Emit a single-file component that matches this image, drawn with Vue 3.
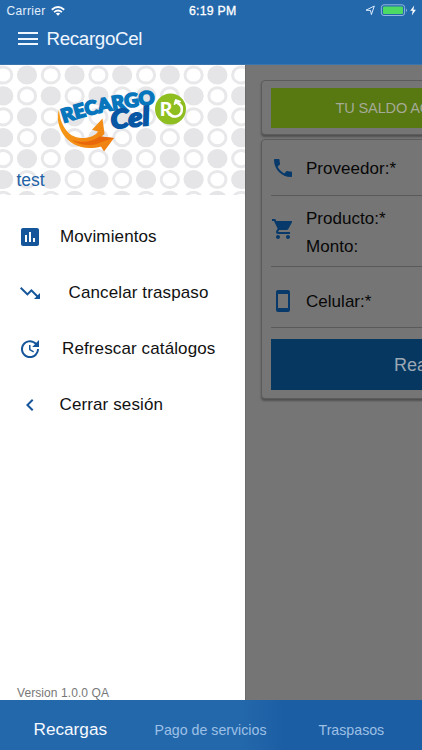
<script setup>
const menu = [
  { label: 'Movimientos', icon: 'chart', indent: 60 },
  { label: 'Cancelar traspaso', icon: 'trend', indent: 68.5 },
  { label: 'Refrescar catálogos', icon: 'update', indent: 62 },
  { label: 'Cerrar sesión', icon: 'back', indent: 59.5 },
]
const paths = {
  chart: 'M19 3H5c-1.1 0-2 .9-2 2v14c0 1.1.9 2 2 2h14c1.1 0 2-.9 2-2V5c0-1.1-.9-2-2-2zM9 17H7v-7h2v7zm4 0h-2V7h2v10zm4 0h-2v-4h2v4z',
  trend: 'M16 18l2.29-2.29-4.88-4.88-4 4L2 7.41 3.41 6l6 6 4-4 6.3 6.29L22 12v6z',
  update: 'M21 10.12h-6.78l2.74-2.82c-2.73-2.7-7.15-2.8-9.88-.1-2.73 2.71-2.73 7.08 0 9.79s7.15 2.71 9.88 0C18.32 15.65 19 14.08 19 12.1h2c0 1.98-.88 4.55-2.64 6.29-3.51 3.48-9.21 3.48-12.72 0-3.5-3.47-3.53-9.11-.02-12.58s9.14-3.47 12.65 0L21 3v7.12zM12.5 8v4.25l3.5 2.08-.72 1.21L11 13V8h1.5z',
  back: 'M15.41 7.41L14 6l-6 6 6 6 1.41-1.41L10.83 12z',
}
const dots = []
for (let r = 0; r < 7; r++) {
  for (let c = 0; c < 11; c++) {
    dots.push({ x: 3.2 + c * 23.8, y: 10 + r * 20.9, solid: (r + c) % 2 === 1 })
  }
}
</script>

<template>
  <div class="screen">
    <header>
      <div class="status">
        <span class="carrier">Carrier</span>
        <svg class="wifi" viewBox="0 0 14 10"><g fill="none" stroke="#fff" stroke-width="1.8"><path d="M.8 3.7Q7-1.7 13.2 3.7" /><path d="M3.1 6.1q3.9-3.2 7.8 0" /></g><path d="M4.8 7.5q2.2-1.6 4.4 0L7 9.8z" fill="#fff" /></svg>
        <span class="clock">6:19 PM</span>
        <svg class="power" viewBox="0 0 54 13">
          <path d="M1 6.2L9.3 2 6.4 10.6 5.5 6.5z" fill="none" stroke="#dcecff" stroke-width="1" stroke-linejoin="round" />
          <rect x="16.4" y=".8" width="23.2" height="10.7" rx="2.5" fill="none" stroke="#8fb5df" />
          <rect x="18" y="2.4" width="20" height="7.5" rx="1" fill="#4cd964" />
          <path d="M41 4.4q2 1.8 0 3.6z" fill="#8fb5df" />
          <path d="M49.2 1.5l-4 5.3h2.5l-.9 4.7 4.1-5.8h-2.5z" fill="#fff" />
        </svg>
      </div>
      <div class="title">
        <span class="burger"><i></i><i></i><i></i></span>
        <h1>RecargoCel</h1>
      </div>
    </header>

    <main>
      <aside>
        <div class="hero">
          <svg viewBox="0 0 245 130">
            <template v-for="(d, i) in dots" :key="i">
              <ellipse v-if="d.solid" :cx="d.x" :cy="d.y" rx="10.1" ry="9.6" fill="#e5e5e8" />
              <ellipse v-else :cx="d.x" :cy="d.y" rx="8.6" ry="8.1" fill="#fff" stroke="#e8e8eb" stroke-width="3" />
            </template>
            <defs>
              <linearGradient id="flame" x1="0" y1="0" x2="1" y2="1"><stop offset="0" stop-color="#f7a11b" /><stop offset="1" stop-color="#ef7d10" /></linearGradient>
              <path id="arc" d="M63.5 58 Q108 43 162 38.5" />
            </defs>
            <path d="M59 44.5C59.5 56 66 73 82 73 90 73 95.500 70.500 98 66.500L92 64.800 102.500 53.500 104.500 69 101.500 71.500 114 73 104 86.500 101 81.500C84 86 70 80 63 69 58 61 56.500 52 59 44.500Z" fill="url(#flame)" />
            <path d="M72 75C83 79 94 76 99.500 71.500L114 73 103 76.500C92 82 80 81 72 75Z" fill="#e9680c" />
            <text class="brand"><textPath href="#arc" textLength="94" lengthAdjust="spacingAndGlyphs">RECARGO</textPath></text>
            <text class="cel" transform="translate(111.500 64) rotate(-6)" textLength="39" lengthAdjust="spacingAndGlyphs">Cel</text>
            <circle cx="170.500" cy="44" r="15.500" fill="#8fbe21" />
            <text class="r" x="159.700" y="51" textLength="12.500" lengthAdjust="spacingAndGlyphs">R</text>
            <path d="M169.500 48.500C172 53 180 52.500 181.600 46.500 182.500 42.500 181 39.500 177.500 38" fill="none" stroke="#fff" stroke-width="2.600" />
            <path d="M174 39.500L175.500 34.500 181 36.500Z" fill="#fff" stroke="#fff" />
          </svg>
          <span class="user">test</span>
        </div>
        <nav>
          <a v-for="m in menu" :key="m.label">
            <span class="slot" :style="{ width: m.indent + 'px' }"><svg viewBox="0 0 24 24"><path :d="paths[m.icon]" /></svg></span>
            <span>{{ m.label }}</span>
          </a>
        </nav>
        <small>Version 1.0.0 QA</small>
      </aside>

      <section class="content">
        <div class="card balance"><div class="saldo">TU SALDO ACTUAL</div></div>
        <div class="card form">
          <div class="row first">
            <svg viewBox="0 0 24 24"><path d="M6.620 10.790c1.440 2.830 3.760 5.140 6.590 6.590l2.200-2.200c.27-.27.67-.36 1.020-.24 1.120.37 2.330.57 3.570.57.55 0 1 .45 1 1V20c0 .55-.45 1-1 1-9.390 0-17-7.610-17-17 0-.55.45-1 1-1h3.500c.55 0 1 .45 1 1 0 1.250.2 2.450.57 3.570.11.35.03.74-.25 1.020l-2.200 2.200z" /></svg>
            <div>Proveedor:*</div>
          </div>
          <div class="row second">
            <svg viewBox="0 0 24 24"><path d="M7 18c-1.100 0-1.990.9-1.990 2S5.900 22 7 22s2-.9 2-2-.9-2-2-2zM1 2v2h2l3.600 7.590-1.350 2.450c-.16.28-.25.61-.25.96 0 1.100.9 2 2 2h12v-2H7.420c-.14 0-.25-.11-.25-.25l.03-.12.9-1.630h7.450c.75 0 1.410-.41 1.750-1.030l3.580-6.490A1 1 0 0 0 20 4H5.210l-.94-2H1zm16 16c-1.100 0-1.990.9-1.990 2s.89 2 1.990 2 2-.9 2-2-.9-2-2-2z" /></svg>
            <div>Producto:*<br>Monto:</div>
          </div>
          <div class="row third">
            <svg viewBox="0 0 24 24"><path d="M17 1.010L7 1c-1.100 0-2 .9-2 2v18c0 1.100.9 2 2 2h10c1.100 0 2-.9 2-2V3c0-1.100-.9-1.990-2-1.990zM17 19H7V5h10v14z" /></svg>
            <div>Celular:*</div>
          </div>
          <div class="submit">Realizar recarga</div>
        </div>
      </section>
    </main>

    <footer>
      <b>Recargas</b>
      <span class="pago">Pago de servicios</span>
      <span>Traspasos</span>
    </footer>
  </div>
</template>

<style>
body { margin: 0; overflow: hidden; }
</style>

<style scoped>
.screen { width: 422px; height: 750px; display: flex; flex-direction: column; overflow: hidden; font-family: "Liberation Sans", Arial, sans-serif; background: #757575; }
header { height: 65px; flex: none; background: #2468ac; color: #fff; border-bottom: 1px solid #3a75ae; box-sizing: border-box; }
.status { height: 21px; display: grid; grid-template-columns: 51px 138px 176px 54px; align-items: center; font-size: 12px; }
.carrier { padding-left: 6.500px; letter-spacing: .35px; color: #e3effb; }
.wifi { width: 14px; height: 10px; }
.clock { font-size: 12.300px; letter-spacing: .25px; -webkit-text-stroke: .3px #fff; white-space: nowrap; }
.power { width: 54px; height: 13px; }
.title { display: flex; align-items: center; height: 35px; padding-left: 18px; gap: 8.500px; }
.burger { display: flex; flex-direction: column; gap: 3.500px; width: 20px; }
.burger i { height: 2px; background: #eef6ff; }
h1 { margin: 0; font-size: 18.800px; letter-spacing: -.35px; font-weight: 400; color: #eef6ff; }
main { flex: 1; min-height: 0; display: flex; }
aside { width: 245px; flex: none; background: #fff; display: flex; flex-direction: column; }
.hero { height: 130px; display: grid; overflow: hidden; }
.hero svg { grid-area: 1 / 1; width: 245px; height: 130px; }
.user { grid-area: 1 / 1; align-self: end; padding: 0 0 5px 16.500px; font-size: 17.500px; line-height: 20px; color: #1f62a6; }
.brand { font: 900 19px Lato, sans-serif; fill: #0876bc; stroke: #0876bc; stroke-width: 1.600px; }
.cel { font: italic 900 26px Lato, sans-serif; fill: #0857a4; stroke: #0857a4; stroke-width: 1.600px; }
.r { font: 900 19px Lato, sans-serif; fill: #fff; }
nav { padding-top: 14px; }
nav a { display: flex; align-items: center; height: 56px; font-size: 17px; letter-spacing: .12px; color: #111; white-space: nowrap; }
.slot { flex: none; display: flex; padding-left: 17.500px; box-sizing: border-box; }
.slot svg { width: 24px; height: 24px; fill: #15559a; }
small { margin-top: auto; padding-left: 17px; font-size: 12px; letter-spacing: .08px; line-height: 14px; color: #777; }
.content { flex: 1; min-width: 0; overflow: hidden; padding: 15px 0 0 15px; background: #757575; border-left: 1px solid #6b6b6b; box-sizing: border-box; display: flex; flex-direction: column; gap: 4px; }
.card { width: 390px; box-sizing: border-box; border: 1px solid #5c5c5c; border-radius: 4px; background: #757575; padding: 0 9px; box-shadow: 0 2px 2px #505050; }
.balance { height: 55px; padding-top: 7px; }
.saldo { height: 40px; line-height: 40px; background: #587811; color: #a4aa98; font-size: 14.600px; letter-spacing: -.17px; padding-left: 64.500px; }
.form { height: 260px; }
.row { display: flex; align-items: center; border-bottom: 1px solid #5a5a5a; color: #080808; font-size: 17px; letter-spacing: .03px; line-height: 28px; box-sizing: border-box; }
.row svg { width: 24px; height: 24px; fill: #07396a; margin: 0 11px 2px 0; flex: none; }
.first { height: 56px; padding-top: 2px; }
.second { height: 71px; }
.second svg { margin-bottom: 4px; }
.second div { padding-top: 3px; }
.third { height: 61px; padding-top: 9px; }
.submit { height: 51px; margin-top: 11px; background: #063761; color: #9ba7b3; font-size: 18px; line-height: 53px; padding-left: 123px; box-sizing: border-box; white-space: nowrap; }
footer { height: 50px; flex: none; background: linear-gradient(90deg, #2468ac 57%, #1c5ea3 67%); color: #9dc0e6; display: flex; align-items: baseline; font-size: 14.200px; line-height: 60px; white-space: nowrap; }
footer b { width: 154.500px; padding-left: 33.500px; box-sizing: border-box; font-weight: 400; font-size: 17.200px; line-height: 58px; color: #f6faff; }
.pago { width: 164px; }
</style>
